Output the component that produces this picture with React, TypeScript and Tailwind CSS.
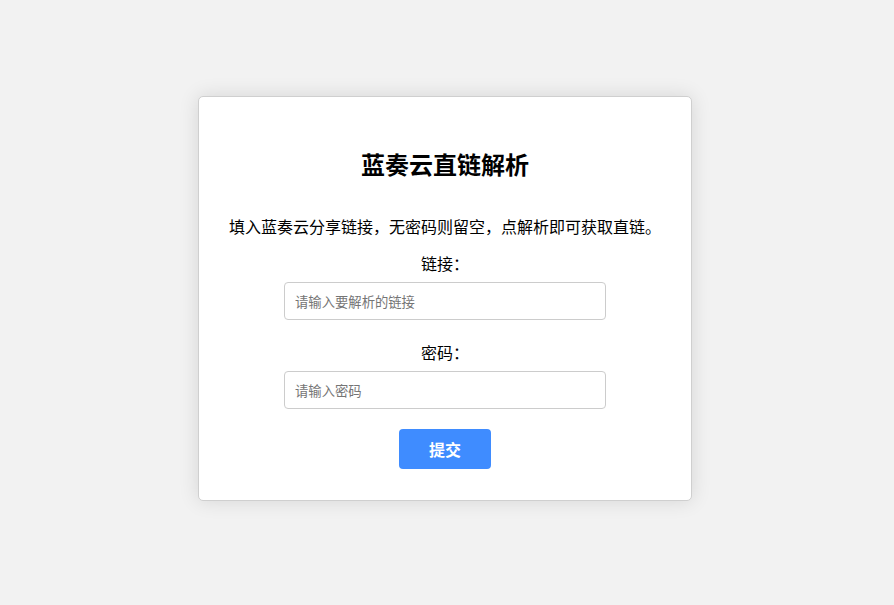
import React from "react";

export default function App() {
  return (
    <div
      className="min-h-screen w-full bg-[#f2f2f2] flex justify-center pt-[96px] pr-[4px]"
      style={{ fontFamily: '"Noto Sans CJK SC", "Noto Sans", sans-serif' }}
    >
      <div className="w-[494px] h-[405px] bg-white border border-[#cfcfcf] rounded-[5px] shadow-[0_0_20px_rgba(0,0,0,0.12)] flex flex-col items-center pt-[51px] text-black">
        <h1 className="text-[24px] leading-[32px] font-bold m-0">蓝奏云直链解析</h1>
        <p className="text-[16px] leading-[24px] mt-[34px]">
          填入蓝奏云分享链接，无密码则留空，点解析即可获取直链。
        </p>
        <label className="text-[16px] leading-[24px] mt-[13px]">链接：</label>
        <input
          type="text"
          placeholder="请输入要解析的链接"
          className="mt-[7px] w-[322px] h-[38px] border border-[#cccccc] rounded-[4px] px-[10px] text-[13.33px] outline-none placeholder:text-[#757575]"
        />
        <label className="text-[16px] leading-[24px] mt-[20px]">密码：</label>
        <input
          type="text"
          placeholder="请输入密码"
          className="mt-[7px] w-[322px] h-[38px] border border-[#cccccc] rounded-[4px] px-[10px] text-[13.33px] outline-none placeholder:text-[#757575]"
        />
        <button className="mt-[20px] w-[92px] h-[40px] bg-[#3f8cff] text-white text-[16px] font-bold rounded-[4px]">
          提交
        </button>
      </div>
    </div>
  );
}
